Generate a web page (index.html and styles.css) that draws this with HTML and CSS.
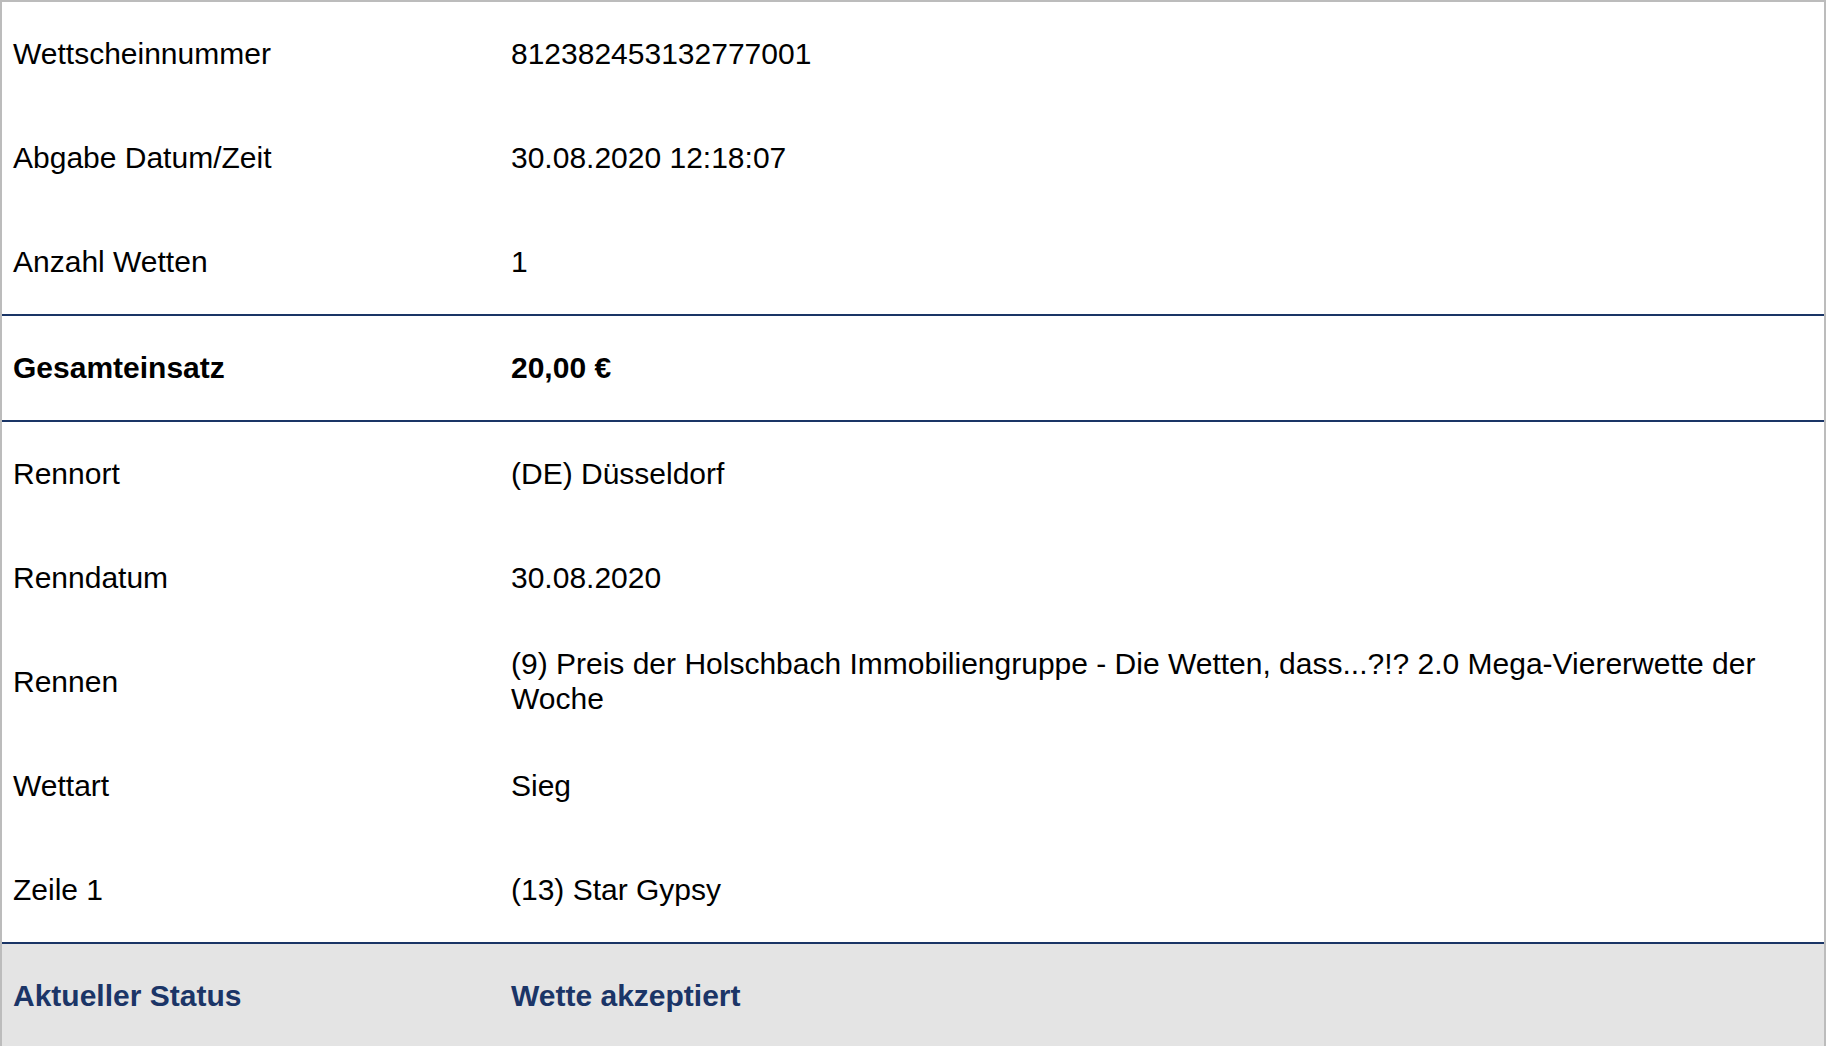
FILE: index.html
```html
<!DOCTYPE html>
<html lang="de">
<head>
<meta charset="utf-8">
<title>Wettschein</title>
<link rel="stylesheet" href="styles.css">
</head>
<body>
<div class="ticket">
  <div class="group">
    <div class="row"><div class="label">Wettscheinnummer</div><div class="value">812382453132777001</div></div>
    <div class="row"><div class="label">Abgabe Datum/Zeit</div><div class="value">30.08.2020 12:18:07</div></div>
    <div class="row"><div class="label">Anzahl Wetten</div><div class="value">1</div></div>
  </div>
  <div class="group total">
    <div class="row"><div class="label">Gesamteinsatz</div><div class="value">20,00 €</div></div>
  </div>
  <div class="group">
    <div class="row"><div class="label">Rennort</div><div class="value">(DE) Düsseldorf</div></div>
    <div class="row"><div class="label">Renndatum</div><div class="value">30.08.2020</div></div>
    <div class="row"><div class="label">Rennen</div><div class="value">(9) Preis der Holschbach Immobiliengruppe - Die Wetten, dass...?!? 2.0 Mega-Viererwette der Woche</div></div>
    <div class="row"><div class="label">Wettart</div><div class="value">Sieg</div></div>
    <div class="row"><div class="label">Zeile 1</div><div class="value">(13) Star Gypsy</div></div>
  </div>
  <div class="group status">
    <div class="row"><div class="label">Aktueller Status</div><div class="value">Wette akzeptiert</div></div>
  </div>
</div>
</body>
</html>
```
FILE: styles.css
```css
html, body {
  margin: 0;
  padding: 0;
  background: #fff;
}
body {
  font-family: "Liberation Sans", Arial, Helvetica, sans-serif;
  font-size: 30px;
  color: #000;
  overflow: hidden;
}
.ticket {
  border: 2px solid #bcbcbc;
  border-bottom: none;
}
.group + .group {
  border-top: 2px solid #1a3566;
}
.row {
  display: grid;
  grid-template-columns: 498px 1fr;
  height: 104px;
  align-items: center;
  box-sizing: border-box;
  padding-bottom: 2px;
}
.label, .value {
  padding: 0 11px;
  line-height: 35px;
}
.total .row {
  font-weight: bold;
}
.status {
  background: #e4e4e4;
}
.status .row {
  font-weight: bold;
  color: #1b3567;
}
```
